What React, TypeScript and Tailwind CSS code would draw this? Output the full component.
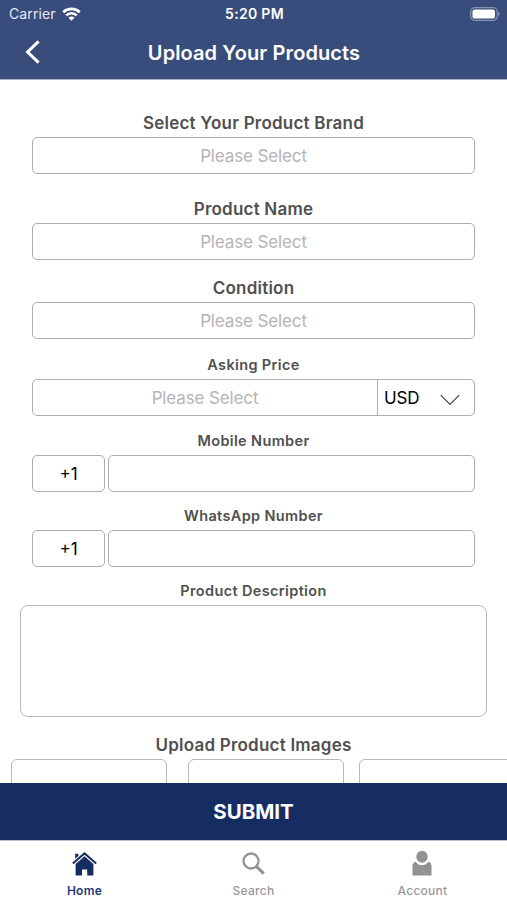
import type { ReactNode } from "react";
import clsx from "clsx";

function StatusBar() {
  return (
    <div className="grid h-[27px] grid-cols-3 items-center pr-[7px] pl-[9px] text-white">
      <div className="flex items-center gap-[6px]">
        <span className="text-[14px] leading-none tracking-[0.1px] text-[#e4e9f5]">Carrier</span>
        <svg viewBox="0 0 19 14" className="h-[14px] w-[19px]" fill="none" stroke="currentColor" strokeWidth="2.7">
          <path d="M1.2 5.2a12 12 0 0 1 16.6 0" />
          <path d="M4.2 8.4a7.6 7.6 0 0 1 10.6 0" />
          <path d="M9.5 13.8 6.4 10.7a4.4 4.4 0 0 1 6.2 0Z" fill="currentColor" stroke="none" />
        </svg>
      </div>
      <span className="text-center text-[14px] leading-none font-semibold tracking-[0.3px] whitespace-nowrap">
        5:20 PM
      </span>
      <svg viewBox="0 0 30 14" className="h-[14px] w-[30px] justify-self-end">
        <rect x="0.7" y="0.7" width="26.6" height="12.6" rx="4" fill="none" stroke="#8794b3" strokeWidth="1.2" />
        <rect x="2.5" y="2.4" width="22.5" height="9.2" rx="2.2" fill="#fff" />
        <path d="M28.4 4.8v4.4q1.4-.8 1.4-2.2t-1.4-2.2Z" fill="#8794b3" />
      </svg>
    </div>
  );
}

function Header() {
  return (
    <header className="h-[80px] shrink-0 border-b border-[#aab4cd] bg-[#384d7b] text-white">
      <StatusBar />
      <div className="grid h-[50px] grid-cols-[60px_1fr_60px] items-center">
        <button aria-label="Back" className="pl-[25px]">
          <svg viewBox="0 0 16 24" className="h-[24px] w-[16px]" fill="none" stroke="currentColor" strokeWidth="3">
            <path d="M13.6 1.3 2.6 12l11 10.7" />
          </svg>
        </button>
        <h1 className="pt-px pl-px text-center text-[20px] leading-none font-semibold tracking-[0.1px]">
          Upload Your Products
        </h1>
      </div>
    </header>
  );
}

function Label({ children, small }: { children: ReactNode; small?: boolean }) {
  return (
    <div
      className={clsx(
        "flex h-[30px] items-center justify-center pt-[2px] leading-none font-semibold text-[#505050]",
        small ? "text-[14.5px] tracking-[0.36px]" : "text-[17px] tracking-[0.22px]",
      )}
    >
      {children}
    </div>
  );
}

function Box({ children, className }: { children?: ReactNode; className?: string }) {
  return (
    <div
      className={clsx(
        "flex h-[37px] items-center justify-center rounded-[5px] border-[1.5px] border-[#adadad] text-[17px] leading-none",
        className,
      )}
    >
      {children}
    </div>
  );
}

function Placeholder() {
  return <span className="pt-px tracking-[-0.13px] text-[#b4b4b4]">Please Select</span>;
}

function PhoneField({ label }: { label: string }) {
  return (
    <div>
      <Label small>{label}</Label>
      <div className="flex gap-[3px]">
        <Box className="w-[73px] pt-px text-black">+1</Box>
        <Box className="flex-1" />
      </div>
    </div>
  );
}

// Home is the active tab, the other two are greyed out.
function TabBar() {
  return (
    <nav className="grid h-[60px] shrink-0 grid-cols-3 border-t border-[#b9bfcd] bg-white text-[12px] leading-none font-medium tracking-[0.26px] text-[#999]">
      <div className="flex flex-col items-center pt-[11px] font-semibold text-[#233b76]">
        <svg viewBox="0 0 25 24" className="mb-[9px] h-[24px] w-[25px]" fill="#162d64">
          <path d="M12.5 0 16.5 3.4 24.8 10.8 23.5 12.3 12.5 2.7 1.5 12.3.2 10.8Z" />
          <path d="M3.2 1.8h3.2v2.1L3.2 6.7Z" />
          <path d="M12.5 4.3 21.4 12v11.5h-6.2v-6H10v6H3.6V12Z" />
        </svg>
        Home
      </div>
      <div className="flex flex-col items-center pt-[11px]">
        <svg viewBox="0 0 24 24" className="mb-[9px] h-[24px] w-[24px]" fill="none" stroke="#929292">
          <circle cx="9" cy="9" r="7.5" strokeWidth="2.3" />
          <path d="m14.4 14.4 7.4 7.2" strokeWidth="3" />
        </svg>
        Search
      </div>
      <div className="flex flex-col items-center pt-[9px]">
        <svg viewBox="0 0 20 26" className="mr-px mb-[9px] h-[26px] w-[20px]" fill="#929292">
          <ellipse cx="10" cy="6.7" rx="5.7" ry="6" />
          <path d="M.5 25.5V16q0-3.500 3.200-4.200Q6.200 15.300 10 15.300t6.300-3.500Q19.500 12.500 19.500 16v9.500Z" />
        </svg>
        Account
      </div>
    </nav>
  );
}

export default function App() {
  return (
    <div className="flex h-[900px] w-[507px] flex-col overflow-hidden bg-white font-[Inter,'Liberation_Sans',sans-serif]">
      <Header />

      <main className="min-h-0 flex-1 overflow-hidden pt-[27px]">
        <div className="mx-[32px]">
          <Label>Select Your Product Brand</Label>
          <Box className="mb-[19px]"><Placeholder /></Box>

          <Label>Product Name</Label>
          <Box className="mb-[12px]"><Placeholder /></Box>

          <Label>Condition</Label>
          <Box className="mb-[10px]"><Placeholder /></Box>

          <Label small>Asking Price</Label>
          <Box className="mb-[9px]">
            <div className="flex h-full flex-1 items-center justify-center border-r-[1.5px] border-[#adadad]">
              <Placeholder />
            </div>
            <div className="flex w-[96px] items-center justify-between pt-[2px] pr-[14px] pl-[6px] text-black">
              <span className="tracking-[-0.2px]">USD</span>
              <svg viewBox="0 0 20 12" className="mt-[2px] h-[12px] w-[20px]" fill="none" stroke="#444" strokeWidth="1.2">
                <path d="m.8 1.2 9.2 9.3 9.2-9.3" />
              </svg>
            </div>
          </Box>

          <PhoneField label="Mobile Number" />
          <div className="mt-[8px]">
            <PhoneField label="WhatsApp Number" />
          </div>
        </div>

        <div className="mx-[20px] mt-[8px]">
          <Label small>Product Description</Label>
          <div className="h-[112px] rounded-[8px] border-[1.5px] border-[#b8b8b8]" />
        </div>

        <div className="mt-[12px]">
          <Label>Upload Product Images</Label>
          <div className="ml-[11px] flex">
            <div className="mr-[21px] h-[120px] w-[156px] shrink-0 rounded-[6px] border-[1.5px] border-[#b8b8b8]" />
            <div className="mr-[15px] h-[120px] w-[156px] shrink-0 rounded-[6px] border-[1.5px] border-[#b8b8b8]" />
            <div className="h-[120px] w-[156px] shrink-0 rounded-[6px] border-[1.5px] border-[#b8b8b8]" />
          </div>
        </div>
      </main>

      <button className="h-[57px] shrink-0 bg-[#162d64] pt-px text-[20.5px] leading-none font-bold text-white">
        SUBMIT
      </button>
      <TabBar />
    </div>
  );
}
